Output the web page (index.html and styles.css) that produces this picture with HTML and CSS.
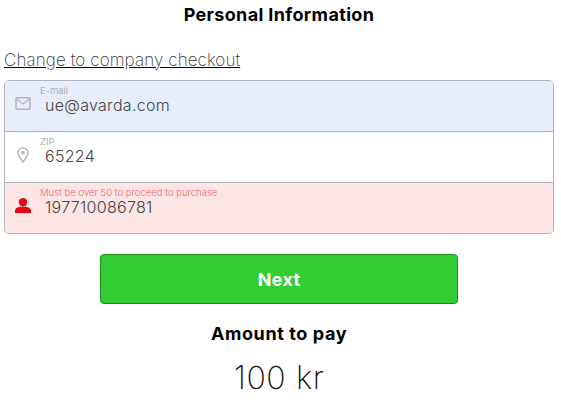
FILE: index.html
```html
<!DOCTYPE html>
<html>
	<head>
		<meta charset="UTF-8">
		<title>Personal Information</title>
		<link rel="stylesheet" href="styles.css">
	</head>
	<body>
		<div class="page">
			<h1 class="title">Personal Information</h1>
			<a class="switch_link" href="#">Change to company checkout</a>
			<div class="fields">
				<div class="field field_blue">
					<div class="field_icon">
						<svg width="16" height="14" viewBox="0 -1 16 14">
							<rect x="1" y="0.75" width="14" height="11.5" rx="1" fill="none" stroke="#b4b4b8" stroke-width="1.5"/>
							<path d="M1 1.5L8 7L15 1.5" fill="none" stroke="#b4b4b8" stroke-width="1.2"/>
						</svg>
					</div>
					<div class="field_text">
						<label class="field_label">E-mail</label>
						<div class="field_value">ue@avarda.com</div>
					</div>
				</div>
				<div class="field">
					<div class="field_icon">
						<svg width="12" height="16" viewBox="0 0 12 16">
							<path d="M6 1C3.2 1 1 3.2 1 5.9C1 9 4.2 12.6 6 15C7.8 12.6 11 9 11 5.9C11 3.2 8.8 1 6 1Z" fill="none" stroke="#b4b4b8" stroke-width="1.5"/>
							<circle cx="6" cy="5.8" r="1.7" fill="#b4b4b8"/>
						</svg>
					</div>
					<div class="field_text">
						<label class="field_label">ZIP</label>
						<div class="field_value">65224</div>
					</div>
				</div>
				<div class="field field_error">
					<div class="field_icon">
						<svg width="16" height="15" viewBox="0 0 16 15">
							<circle cx="8" cy="4.2" r="4.2" fill="#e30613"/>
							<path d="M0 15V12.5C0 10.5 2.5 9.5 5 8.8L11 8.8C13.5 9.5 16 10.5 16 12.5V15Z" fill="#e30613"/>
						</svg>
					</div>
					<div class="field_text">
						<label class="field_label">Must be over 50 to proceed to purchase</label>
						<div class="field_value">197710086781</div>
					</div>
				</div>
			</div>
			<button class="next_btn" type="button">Next</button>
			<div class="amount_title">Amount to pay</div>
			<div class="amount">100 kr</div>
		</div>
	</body>
</html>
```

FILE: styles.css
```css
body{
	margin:0;
	background:#fff;
	font-family:"Inter","Liberation Sans",sans-serif;
	color:#000;
}
.page{
	width:558px;
	box-sizing:border-box;
	padding:4px 4px 0;
	display:flex;
	flex-direction:column;
}
.title{
	margin:0;
	font-size:18px;
	line-height:22px;
	font-weight:700;
	letter-spacing:0.35px;
	text-align:center;
}
.switch_link{
	margin-top:23px;
	font-size:17px;
	line-height:22px;
	font-weight:200;
	letter-spacing:0.1px;
	color:#333;
	text-decoration:underline;
	text-decoration-color:#000;
}
.fields{
	margin-top:9px;
	border:1px solid #b4b4bc;
	border-radius:5px;
	overflow:hidden;
}
.field{
	height:50px;
	display:flex;
	background:#fff;
	border-bottom:1px solid #b4b4bc;
}
.field:last-child{
	border-bottom:none;
}
.field_blue{
	background:#e6eefc;
}
.field_error{
	background:#fde5e5;
}
.field_icon{
	width:35px;
	padding-top:15px;
	display:flex;
	justify-content:center;
	align-items:flex-start;
}
.field_text{
	padding-top:5px;
}
.field_label{
	display:block;
	font-size:9.5px;
	line-height:9px;
	font-weight:300;
	color:#9a9a9a;
}
.field_error .field_label{
	color:#f0656f;
}
.field_value{
	margin-left:5px;
	font-size:16px;
	line-height:20px;
	font-weight:300;
	letter-spacing:0.3px;
	color:#444;
}
.next_btn{
	align-self:center;
	width:358px;
	height:50px;
	margin:20px 0 0;
	background:#32cd32;
	border:1px solid #178f17;
	border-radius:4px;
	color:#fff;
	font-family:inherit;
	font-size:18px;
	font-weight:700;
	letter-spacing:0.3px;
}
.amount_title{
	margin-top:18px;
	font-size:18px;
	line-height:24px;
	font-weight:700;
	letter-spacing:0.6px;
	text-align:center;
}
.amount{
	margin-top:13px;
	font-size:32px;
	line-height:38px;
	font-weight:200;
	letter-spacing:0.6px;
	text-align:center;
	color:#111;
}
```
